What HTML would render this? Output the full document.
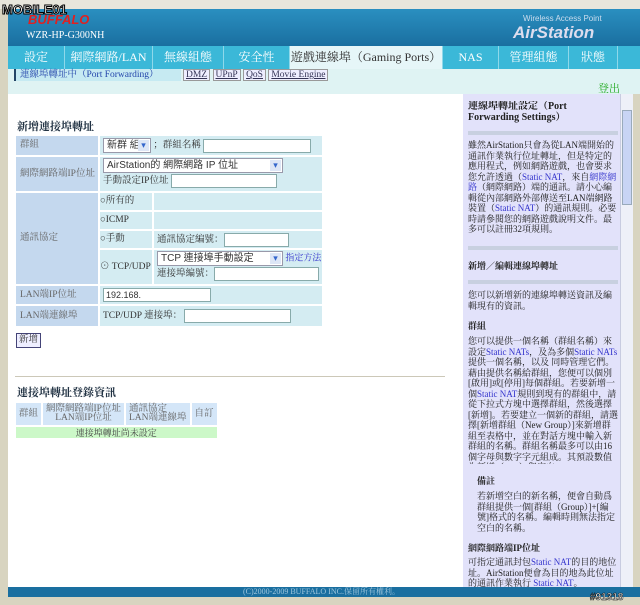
<!DOCTYPE html>
<html><head><meta charset="utf-8"><style>
*{margin:0;padding:0;box-sizing:border-box}
body{width:640px;height:605px;background:#d8d4c0;position:relative;overflow:hidden;font-family:"Liberation Serif","Noto Serif CJK SC","Noto Sans CJK TC",serif;font-size:10px;color:#333}
.abs{position:absolute}
#hdr{left:8px;top:9px;width:632px;height:37px;background:linear-gradient(#2a8fc0,#1a6fa0)}
#nav{left:8px;top:46px;width:632px;height:23px;background:#3bb8d8;display:flex}
#nav div{color:#fff;font-size:12px;text-align:center;line-height:23px;border-right:1px solid #8fd8ea;white-space:nowrap}
#sub{left:8px;top:69px;width:632px;height:25px;background:#dff3f3}
#main{left:8px;top:94px;width:455px;height:493px;background:#fff}
#side{left:463px;top:94px;width:157px;height:493px;background:#e2e2fa;font-size:9px;line-height:10.5px;color:#222;overflow:hidden}
#side>div{position:absolute;left:5px;width:150px;overflow:hidden}
#sb{left:620px;top:94px;width:13px;height:493px;background:#eef0f8;border-left:1px solid #c8cce0}
#foot{left:8px;top:587px;width:632px;height:10px;background:#1a6fa0;color:#9fc6dd;font-size:8px;line-height:10px;padding-left:235px}
table{border-collapse:separate;border-spacing:2px}
td{line-height:11px}
.lb{background:#c4d8ee;color:#666;padding-left:4px}
.vl{background:#d4ecf2}
.inp{display:inline-block;background:#fff;border:1px solid #8aa;height:14px;vertical-align:middle}
.sel{display:inline-block;background:#fff;border:1px solid #99a;height:15px;vertical-align:middle;font-family:"Liberation Sans","Noto Sans CJK TC",sans-serif;font-size:10px;line-height:13px;padding-left:3px;position:relative}
.sel:after{content:"▾";position:absolute;right:1px;top:1px;width:11px;height:11px;background:#dde6f6;color:#36c;font-size:9px;line-height:11px;text-align:center}
h3{font-size:11px;color:#234;font-weight:bold}
a{color:#33c}
.hr{height:4px;background:#c8d0e0}
</style></head><body>
<div class="abs" style="left:0;top:0;width:640px;height:9px;background:#e8e6dc"></div>
<div class="abs" id="hdr">
 <div class="abs" style="left:20px;top:3px;color:#e02020;font:italic bold 13px 'Liberation Sans',sans-serif">BUFFALO</div>
 <div class="abs" style="left:18px;top:21px;color:#fff;font-size:10px">WZR-HP-G300NH</div>
 <div class="abs" style="left:515px;top:5px;color:#cde;font:8px 'Liberation Sans',sans-serif">Wireless Access Point</div>
 <div class="abs" style="left:505px;top:14px;color:#dde;font:bold 17px 'Liberation Sans',sans-serif;font-style:italic">AirStation</div>
</div>
<div class="abs" style="left:2px;top:2px;font:bold 13px 'Liberation Sans',sans-serif;color:#fff;-webkit-text-stroke:1px #000">MOBILE01</div>
<div class="abs" id="nav">
 <div style="width:57px">設定</div><div style="width:88px">網際網路/LAN</div><div style="width:71px">無線組態</div><div style="width:66px">安全性</div><div style="width:153px;background:#e6f6f8;color:#333">遊戲連線埠（Gaming Ports）</div><div style="width:56px">NAS</div><div style="width:70px">管理組態</div><div style="width:49px">狀態</div><div style="flex:1;border:0"></div>
</div>
<div class="abs" id="sub">
 <div class="abs" style="left:6px;top:0;height:12px;width:167px;background:#c6eaf2;border-left:2px solid #246;color:#2244aa;font-size:9.5px;line-height:12px;padding-left:4px">連線埠轉址中（Port Forwarding）</div>
 <div class="abs" style="left:175px;top:0;font-size:9.5px;line-height:12px;color:#335">
  <span style="border:1px solid #999;background:#eef;padding:0 2px;text-decoration:underline">DMZ</span> <span style="border:1px solid #999;background:#eef;padding:0 2px;text-decoration:underline">UPnP</span> <span style="border:1px solid #999;background:#eef;padding:0 2px;text-decoration:underline">QoS</span> <span style="border:1px solid #999;background:#eef;padding:0 2px;text-decoration:underline">Movie Engine</span></div>
 <div class="abs" style="left:590px;top:11px;color:#2a2;font-size:11px">登出</div>
</div>
<div class="abs" id="main">
 <h3 class="abs" style="left:9px;top:24px">新增連接埠轉址</h3>
 <table class="abs" style="left:6px;top:40px;width:310px;font-size:9.5px">
  <tr style="height:19px"><td class="lb" style="width:82px">群組</td><td class="vl" style="padding-left:3px"><span class="sel" style="width:48px">新群 組</span> ；群組名稱 <span class="inp" style="width:108px"></span></td></tr>
  <tr style="height:34px"><td class="lb">網際網路端IP位址</td><td class="vl" style="padding-left:3px"><span class="sel" style="width:180px">AirStation的 網際網路 IP 位址</span><br><span style="line-height:17px">手動設定IP位址</span> <span class="inp" style="width:106px"></span></td></tr>
  <tr><td class="lb">通訊協定</td><td style="padding:0"><table style="border-spacing:0 2px;width:100%;margin:-2px 0">
   <tr style="height:17px"><td class="vl" style="width:52px">○所有的</td><td class="vl" style="border-left:2px solid #fff"></td></tr>
   <tr style="height:17px"><td class="vl">○ICMP</td><td class="vl" style="border-left:2px solid #fff"></td></tr>
   <tr style="height:17px"><td class="vl">○手動</td><td class="vl" style="border-left:2px solid #fff;padding-left:3px">通訊協定編號：<span class="inp" style="width:65px"></span></td></tr>
   <tr style="height:34px"><td class="vl">⊙ TCP/UDP</td><td class="vl" style="border-left:2px solid #fff;padding-left:3px"><span class="sel" style="width:126px">TCP 連接埠手動設定</span> <a style="font-size:9px">指定方法</a><br><span style="line-height:17px">連接埠編號：</span><span class="inp" style="width:105px"></span></td></tr>
  </table></td></tr>
  <tr style="height:18px"><td class="lb">LAN端IP位址</td><td class="vl" style="padding-left:3px"><span class="inp" style="width:108px;font:9px 'Liberation Sans',sans-serif;padding-left:2px;line-height:12px">192.168.</span></td></tr>
  <tr style="height:20px"><td class="lb">LAN端連線埠</td><td class="vl" style="padding-left:3px">TCP/UDP 連接埠： <span class="inp" style="width:107px"></span></td></tr>
 </table>
 <div class="abs" style="left:8px;top:239px;width:25px;height:15px;border:1px solid #447;background:#eef;font-size:9.5px;text-align:center;line-height:13px">新增</div>
 <div class="abs" style="left:7px;top:282px;width:430px;height:1px;background:#ccc8b8"></div>
 <h3 class="abs" style="left:9px;top:290px">連接埠轉址登錄資訊</h3>
 <table class="abs" style="left:6px;top:307px;font-size:9.5px;color:#666;line-height:9px">
  <tr style="height:22px;background:#d4e6f8"><td style="padding:0 3px">群組</td><td style="text-align:center;padding:0 3px;line-height:9px">網際網路端IP位址<br>LAN端IP位址</td><td style="padding:0 3px;line-height:9px">通訊協定<br>LAN端連線埠</td><td style="padding:0 3px">自訂</td></tr>
  <tr style="height:11px;background:#ccf8c8;color:#444"><td colspan="4" style="text-align:center;font-size:9px;line-height:10px">連接埠轉址尚未設定</td></tr>
 </table>
</div>
<div class="abs" id="side">
 <div style="top:7px;font-weight:bold;font-size:10px;line-height:11px">連線埠轉址設定（Port Forwarding Settings）</div>
 <div class="hr" style="top:37px"></div>
 <div style="top:46px;height:95px">雖然AirStation只會為從LAN端開始的通訊作業執行位址轉址，但是特定的應用程式，例如網路遊戲，也會要求您允許透過（<a>Static NAT</a>，來自<a>網際網路</a>（網際網路）端的通訊。請小心編輯從內部網路外部傳送至LAN端網路裝置（<a>Static NAT</a>）的通訊規則。必要時請參閱您的網路遊戲說明文件。最多可以註冊32項規則。</div>
 <div class="hr" style="top:152px"></div>
 <div style="top:167px;font-weight:bold">新增／編輯連線埠轉址</div>
 <div class="hr" style="top:186px"></div>
 <div style="top:196px;height:22px">您可以新增新的連線埠轉送資訊及編輯現有的資訊。</div>
 <div style="top:227px;font-weight:bold">群組</div>
 <div style="top:242px;height:128px">您可以提供一個名稱（群組名稱）來設定<a>Static NATs</a>，及為多個<a>Static NATs</a>提供一個名稱，以及 同時管理它們。藉由提供名稱給群組，您便可以個別[啟用]或[停用]每個群組。若要新增一個<a>Static NAT</a>規則到現有的群組中，請從下拉式方塊中選擇群組，然後選擇[新增]。若要建立一個新的群組，請選擇[新增群組（New Group）]來新增群組至表格中，並在對話方塊中輸入新群組的名稱。群組名稱最多可以由16個字母與數字字元組成。其預設數值為新增（new）與空白。</div>
 <div style="top:382px;left:14px;width:140px;font-weight:bold">備註</div>
 <div style="top:397px;left:14px;width:140px;height:44px">若新增空白的新名稱，便會自動爲群組提供一個[群組（Group）]+[編號]格式的名稱。編輯時則無法指定空白的名稱。</div>
 <div style="top:449px;font-weight:bold">網際網路端IP位址</div>
 <div style="top:463px;height:40px">可指定通訊封包<a>Static NAT</a>的目的地位址。AirStation便會為目的地為此位址的通訊作業執行 <a>Static NAT</a>。</div>
</div>
<div class="abs" id="sb"><div class="abs" style="left:1px;top:16px;width:10px;height:95px;background:#c8d4f4;border:1px solid #9ab"></div></div>
<div class="abs" id="foot">(C)2000-2009 BUFFALO INC.保留所有權利。</div>
<div class="abs" style="left:590px;top:592px;font:bold 10px 'Liberation Sans',sans-serif;color:#fff;-webkit-text-stroke:.5px #000">#91318</div>
</body></html>
